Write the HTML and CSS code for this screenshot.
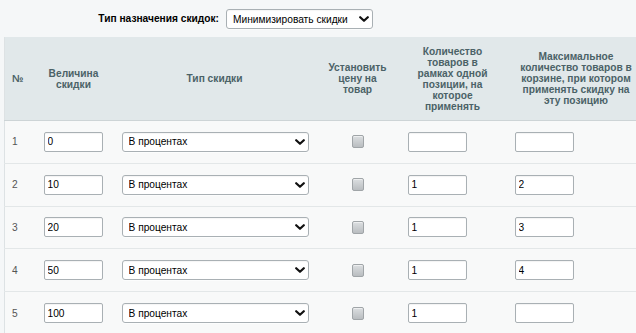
FILE: index.html
```html
<!DOCTYPE html>
<html lang="ru">
<head>
<meta charset="utf-8">
<link rel="stylesheet" href="styles.css">
</head>
<body>
<div class="top">
  <label class="top-label">Тип назначения скидок:</label>
  <span class="sel sel-top">
    <select class="ctl-select"><option>Минимизировать скидки</option></select>
    <svg class="chev" width="10" height="6" viewBox="0 0 10 6"><path d="M1.2 1.2 L5 4.8 L8.8 1.2" fill="none" stroke="#111" stroke-width="2.2" stroke-linecap="round" stroke-linejoin="round"/></svg>
  </span>
</div>
<div class="wrap">
<table class="grid">
  <colgroup>
    <col class="w1"><col class="w2"><col class="w3"><col class="w4"><col class="w5"><col class="w6">
  </colgroup>
  <thead>
    <tr>
      <th class="h-num">№</th>
      <th>Величина<br>скидки</th>
      <th>Тип скидки</th>
      <th>Установить<br>цену на<br>товар</th>
      <th>Количество<br>товаров в<br>рамках одной<br>позиции, на<br>которое<br>применять</th>
      <th>Максимальное<br>количество товаров в<br>корзине, при котором<br>применять скидку на<br>эту позицию</th>
    </tr>
  </thead>
  <tbody>
    <tr>
      <td class="num">1</td>
      <td class="c2"><input class="ctl-input" value="0"></td>
      <td class="c3"><span class="sel sel-type"><select class="ctl-select"><option>В процентах</option></select><svg class="chev" width="10" height="6" viewBox="0 0 10 6"><path d="M1.2 1.2 L5 4.8 L8.8 1.2" fill="none" stroke="#111" stroke-width="2.2" stroke-linecap="round" stroke-linejoin="round"/></svg></span></td>
      <td class="c4"><input type="checkbox" class="ctl-check"></td>
      <td class="c5"><input class="ctl-input" value=""></td>
      <td class="c6"><input class="ctl-input" value=""></td>
    </tr>
    <tr>
      <td class="num">2</td>
      <td class="c2"><input class="ctl-input" value="10"></td>
      <td class="c3"><span class="sel sel-type"><select class="ctl-select"><option>В процентах</option></select><svg class="chev" width="10" height="6" viewBox="0 0 10 6"><path d="M1.2 1.2 L5 4.8 L8.8 1.2" fill="none" stroke="#111" stroke-width="2.2" stroke-linecap="round" stroke-linejoin="round"/></svg></span></td>
      <td class="c4"><input type="checkbox" class="ctl-check"></td>
      <td class="c5"><input class="ctl-input" value="1"></td>
      <td class="c6"><input class="ctl-input" value="2"></td>
    </tr>
    <tr>
      <td class="num">3</td>
      <td class="c2"><input class="ctl-input" value="20"></td>
      <td class="c3"><span class="sel sel-type"><select class="ctl-select"><option>В процентах</option></select><svg class="chev" width="10" height="6" viewBox="0 0 10 6"><path d="M1.2 1.2 L5 4.8 L8.8 1.2" fill="none" stroke="#111" stroke-width="2.2" stroke-linecap="round" stroke-linejoin="round"/></svg></span></td>
      <td class="c4"><input type="checkbox" class="ctl-check"></td>
      <td class="c5"><input class="ctl-input" value="1"></td>
      <td class="c6"><input class="ctl-input" value="3"></td>
    </tr>
    <tr>
      <td class="num">4</td>
      <td class="c2"><input class="ctl-input" value="50"></td>
      <td class="c3"><span class="sel sel-type"><select class="ctl-select"><option>В процентах</option></select><svg class="chev" width="10" height="6" viewBox="0 0 10 6"><path d="M1.2 1.2 L5 4.8 L8.8 1.2" fill="none" stroke="#111" stroke-width="2.2" stroke-linecap="round" stroke-linejoin="round"/></svg></span></td>
      <td class="c4"><input type="checkbox" class="ctl-check"></td>
      <td class="c5"><input class="ctl-input" value="1"></td>
      <td class="c6"><input class="ctl-input" value="4"></td>
    </tr>
    <tr>
      <td class="num">5</td>
      <td class="c2"><input class="ctl-input" value="100"></td>
      <td class="c3"><span class="sel sel-type"><select class="ctl-select"><option>В процентах</option></select><svg class="chev" width="10" height="6" viewBox="0 0 10 6"><path d="M1.2 1.2 L5 4.8 L8.8 1.2" fill="none" stroke="#111" stroke-width="2.2" stroke-linecap="round" stroke-linejoin="round"/></svg></span></td>
      <td class="c4"><input type="checkbox" class="ctl-check"></td>
      <td class="c5"><input class="ctl-input" value="1"></td>
      <td class="c6"><input class="ctl-input" value=""></td>
    </tr>
  </tbody>
</table>
</div>
</body>
</html>
```
FILE: styles.css
```css
html, body {
  margin: 0;
  padding: 0;
  background: #f5f7f8;
  overflow: hidden;
}
body {
  font-family: "Liberation Sans", Arial, sans-serif;
  font-size: 10.2px;
  color: #000;
}
.top {
  display: flex;
  align-items: center;
  height: 37px;
  padding-left: 4px;
}
.top-label {
  width: 215px;
  box-sizing: border-box;
  padding-right: 0;
  margin-right: 7px;
  text-align: right;
  font-weight: bold;
  color: #000;
}
.sel {
  position: relative;
  display: inline-block;
  vertical-align: middle;
}
.sel-top { width: 147px; height: 20px; margin-top: 1px; }
.sel-type { width: 187px; height: 20px; }
.ctl-select {
  -webkit-appearance: none;
  appearance: none;
  display: block;
  width: 100%;
  height: 100%;
  box-sizing: border-box;
  margin: 0;
  border: 1px solid #a9b0b4;
  border-radius: 3px;
  background: #fff;
  font-family: "Liberation Sans", Arial, sans-serif;
  font-size: 10.2px;
  color: #000;
  padding: 0 16px 0 6px;
  box-shadow: 0 1px 0 rgba(255,255,255,0.6), inset 0 1px 1px rgba(0,0,0,0.04);
}
.chev {
  position: absolute;
  right: 4px;
  top: 7px;
  pointer-events: none;
}
.wrap {
  padding-left: 4px;
}
.grid {
  border-collapse: collapse;
  table-layout: fixed;
  width: 640px;
  border-left: 1px solid #dde2e4;
}
.w1 { width: 31px; }
.w2 { width: 76px; }
.w3 { width: 206px; }
.w4 { width: 80px; }
.w5 { width: 110px; }
.w6 { width: 137px; }
.grid th {
  height: 83px;
  padding: 0 4px;
  background: #e1e8ea;
  border-bottom: 1px solid #cdd4d6;
  font-weight: bold;
  font-size: 10.2px;
  line-height: 11px;
  color: #4b6267;
  text-align: center;
  vertical-align: middle;
  white-space: nowrap;
}
.grid th.h-num {
  text-align: left;
  padding-left: 7px;
}
.grid td {
  height: 41.8px;
  padding: 0;
  background: #f8f9f9;
  border-bottom: 1px solid #e3e7e8;
  vertical-align: middle;
}
.grid td.num {
  padding-left: 7px;
  color: #555;
}
.grid td.c2 { padding-left: 8px; }
.grid td.c3 { padding-left: 10px; }
.grid td.c4 { text-align: center; }
.grid td.c5 { padding-left: 10px; }
.grid td.c6 { padding-left: 7px; }
.ctl-input {
  display: block;
  width: 59px;
  height: 20px;
  box-sizing: border-box;
  margin: 0;
  padding: 0 3px;
  border: 1px solid #a9b0b4;
  border-radius: 2px;
  background: #fff;
  font-family: "Liberation Sans", Arial, sans-serif;
  font-size: 10.2px;
  color: #000;
  box-shadow: inset 0 1px 1px rgba(0,0,0,0.05);
  outline: none;
}
.ctl-check {
  -webkit-appearance: none;
  appearance: none;
  display: inline-block;
  vertical-align: middle;
  width: 12px;
  height: 13px;
  margin: 0;
  box-sizing: border-box;
  border: 1px solid #a0a5a8;
  border-radius: 2px;
  background: linear-gradient(#dcdfe1, #b9bdc0);
  box-shadow: inset 0 1px 0 rgba(255,255,255,0.5);
}
```
